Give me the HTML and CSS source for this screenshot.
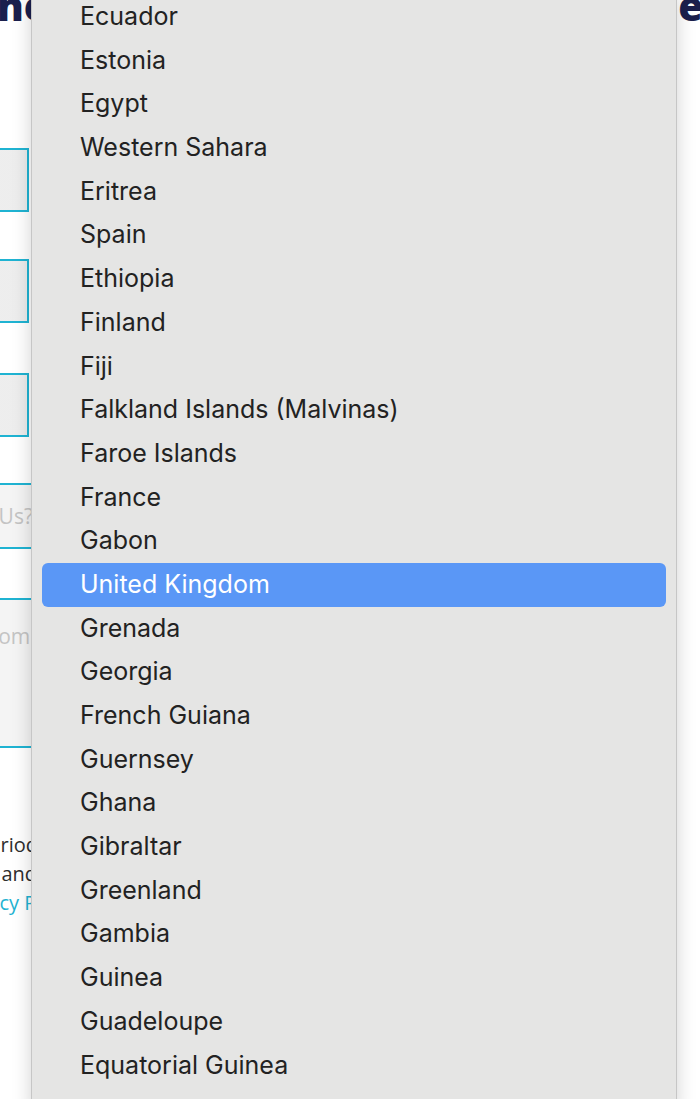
FILE: index.html
```html
<!DOCTYPE html>
<html>
<head>
<meta charset="utf-8">
<link rel="stylesheet" href="styles.css">
</head>
<body>
<div class="page">
  <h1 class="title"><span>he</span><span>e</span></h1>
  <form class="form">
    <div class="field narrow f1"></div>
    <div class="field narrow f2"></div>
    <div class="field narrow f3"></div>
    <div class="field wide f4"><span class="ph">How did you hear about Us?</span></div>
    <div class="field wide area"><span class="ph ph-left">Comments</span></div>
    <p class="note">
      <span class="l1">We will keep your details on file for this period</span>
      <span class="l2">of time to respond to your enquiry and</span>
      <span class="link">read our Privacy Policy</span>
    </p>
  </form>
</div>
<div class="menu">
  <ul class="list">
    <li class="item">Ecuador</li>
    <li class="item">Estonia</li>
    <li class="item">Egypt</li>
    <li class="item">Western Sahara</li>
    <li class="item">Eritrea</li>
    <li class="item">Spain</li>
    <li class="item">Ethiopia</li>
    <li class="item">Finland</li>
    <li class="item">Fiji</li>
    <li class="item">Falkland Islands (Malvinas)</li>
    <li class="item">Faroe Islands</li>
    <li class="item">France</li>
    <li class="item">Gabon</li>
    <li class="item selected">United Kingdom</li>
    <li class="item">Grenada</li>
    <li class="item">Georgia</li>
    <li class="item">French Guiana</li>
    <li class="item">Guernsey</li>
    <li class="item">Ghana</li>
    <li class="item">Gibraltar</li>
    <li class="item">Greenland</li>
    <li class="item">Gambia</li>
    <li class="item">Guinea</li>
    <li class="item">Guadeloupe</li>
    <li class="item">Equatorial Guinea</li>
  </ul>
</div>
</body>
</html>
```

FILE: styles.css
```css
html, body {
  margin: 0;
  padding: 0;
  background: #ffffff;
  overflow: hidden;
}
body {
  width: 700px;
  height: 1099px;
  position: relative;
  font-family: "Open Sans", "Liberation Sans", sans-serif;
}
.page {
  width: 700px;
  height: 1099px;
  overflow: hidden;
}
.title {
  margin: -14px 0 0 0;
  height: 40px;
  display: flex;
  justify-content: space-between;
  font-family: "Open Sans", sans-serif;
  font-weight: 800;
  font-size: 40px;
  line-height: 40px;
  color: #1b1f4d;
}
.title span:first-child { margin-left: -3px; }
.title span:last-child { margin-right: -3px; }
.form {
  margin: 0 0 0 -400px;
  width: 1000px;
  display: flex;
  flex-direction: column;
}
.field {
  box-sizing: border-box;
  border: 2px solid #1fb3d2;
  background: linear-gradient(90deg, #f6f6f6, #ededed);
}
.narrow { width: 429px; height: 64px; }
.f1 { margin-top: 122px; }
.f2 { margin-top: 47px; }
.f3 { margin-top: 50px; }
.wide {
  width: 100%;
  border-left: none;
  border-right: none;
  background: #f4f4f4;
  display: flex;
}
.f4 { margin-top: 46px; height: 66px; align-items: center; }
.area { margin-top: 49px; height: 150px; align-items: flex-start; padding-top: 22px; }
.ph {
  display: block;
  width: 433px;
  text-align: right;
  font-size: 21px;
  color: #c4c4c4;
  white-space: nowrap;
}
.ph-left {
  width: auto;
  text-align: left;
  margin-left: 385px;
}
.note {
  margin: 82px 0 0 0;
  width: 440px;
  display: flex;
  flex-direction: column;
  align-items: flex-end;
  font-size: 20px;
  line-height: 29px;
  color: #2e2e2e;
}
.note span { white-space: nowrap; }
.l1 { margin-right: 2px; }
.l2 { margin-right: 3px; }
.link { color: #1fb3d2; margin-right: -38px; }
.menu {
  position: absolute;
  left: 31px;
  top: -5px;
  width: 646px;
  height: 1120px;
  box-sizing: border-box;
  background: #e5e5e4;
  border-left: 1px solid #c6c6c6;
  border-right: 1px solid #c6c6c6;
  box-shadow: 0 0 18px rgba(0, 0, 0, 0.18);
}
.list {
  list-style: none;
  margin: 0;
  padding: 0;
}
.item {
  height: 43.7px;
  line-height: 43.7px;
  margin: 0 10px;
  padding-left: 38px;
  border-radius: 6px;
  font-family: "Inter", "Liberation Sans", sans-serif;
  font-size: 25px;
  color: #222222;
  white-space: nowrap;
}
.selected {
  background: #5a97f6;
  color: #ffffff;
}
```
